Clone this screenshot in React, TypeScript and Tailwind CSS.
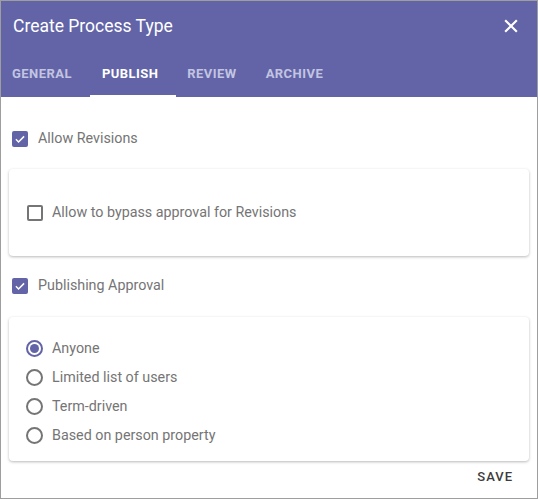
import React, { useState } from 'react';

const tabs = ['General', 'Publish', 'Review', 'Archive'];
const options = ['Anyone', 'Limited list of users', 'Term-driven', 'Based on person property'];

function CheckBox({ checked }: { checked: boolean }) {
  if (checked) {
    return (
      <span className="flex h-[16px] w-[16px] items-center justify-center rounded-[2px] bg-[#6264a7]">
        <svg viewBox="0 0 24 24" className="h-[14px] w-[14px]" fill="none" stroke="white" strokeWidth="2.6">
          <path d="M5 12.5l4.5 4.5L19 7.5" />
        </svg>
      </span>
    );
  }
  return <span className="block h-[16px] w-[16px] rounded-[2px] border-2 border-[#757575]" />;
}

function Radio({ checked }: { checked: boolean }) {
  return (
    <span
      className={
        checked
          ? 'flex h-[17px] w-[17px] items-center justify-center rounded-full border-2 border-[#6264a7]'
          : 'block h-[17px] w-[17px] rounded-full border-2 border-[#757575]'
      }
    >
      {checked && <span className="block h-[9px] w-[9px] rounded-full bg-[#6264a7]" />}
    </span>
  );
}

export default function App() {
  const [selected, setSelected] = useState(0);

  return (
    <div className="h-[499px] w-[538px] border border-[#9e9e9e] bg-white font-['Roboto',sans-serif]">
      {/* Header */}
      <div className="h-[96px] bg-[#6264a7]">
        <div className="flex h-[50px] items-center justify-between pl-[12px] pr-[16px]">
          <h1 className="text-[17.5px] text-white">Create Process Type</h1>
          <svg viewBox="0 0 24 24" className="h-[20px] w-[20px]" fill="none" stroke="white" strokeWidth="2.6">
            <path d="M5 5l14 14M19 5L5 19" />
          </svg>
        </div>
        <div className="mt-[2px] flex h-[44px] items-stretch">
          {tabs.map((t, i) => (
            <div
              key={t}
              className={
                i === 1
                  ? 'flex items-center border-b-2 border-white pl-[12px] pr-[18px] text-[13px] font-bold uppercase tracking-[0.45px] text-white'
                  : 'flex items-center border-b-2 border-transparent pl-[11px] pr-[18px] text-[13px] font-bold uppercase tracking-[0.45px] text-[#c3c4e2]'
              }
            >
              {t}
            </div>
          ))}
        </div>
      </div>

      {/* Body */}
      <div className="px-[8px] pt-[31px] text-[14.3px] text-[#757575]">
        <label className="flex items-center gap-[10px] pl-[3px]">
          <CheckBox checked />
          <span>Allow Revisions</span>
        </label>

        <div className="mt-[20px] flex h-[87px] items-center rounded-[4px] bg-white pl-[18px] shadow-[0_1px_3px_rgba(0,0,0,0.28)]">
          <label className="flex items-center gap-[9px]">
            <CheckBox checked={false} />
            <span>Allow to bypass approval for Revisions</span>
          </label>
        </div>

        <label className="mt-[19px] flex items-center gap-[10px] pl-[3px]">
          <CheckBox checked />
          <span>Publishing Approval</span>
        </label>

        <div className="mt-[20px] flex h-[144px] flex-col gap-[12px] rounded-[4px] bg-white pl-[17px] pt-[23px] shadow-[0_1px_3px_rgba(0,0,0,0.28)]">
          {options.map((o, i) => (
            <label key={o} className="flex items-center gap-[9px]" onClick={() => setSelected(i)}>
              <Radio checked={selected === i} />
              <span className="leading-[17px]">{o}</span>
            </label>
          ))}
        </div>

        <div className="flex justify-end pr-[16px] pt-[6px]">
          <button className="text-[13px] font-medium uppercase tracking-[1px] text-[#3c3c3c]">Save</button>
        </div>
      </div>
    </div>
  );
}
